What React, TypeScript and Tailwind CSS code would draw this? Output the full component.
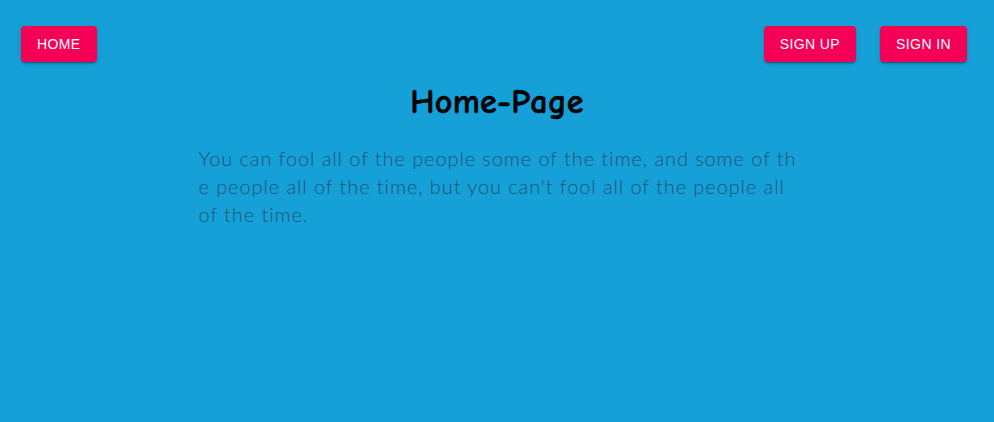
import React from 'react'

const btn =
  "h-9 px-4 rounded bg-[#f50057] text-white text-sm uppercase tracking-[0.4px] shadow-[0_3px_1px_-2px_rgba(0,0,0,0.2),0_2px_2px_0_rgba(0,0,0,0.14),0_1px_5px_0_rgba(0,0,0,0.12)] font-['Liberation_Sans',Arial,sans-serif]"

export default function App() {
  return (
    <div className="w-[994px] h-[422px] bg-[#15a0d8] overflow-hidden">
      {/* Top bar */}
      <div className="flex items-center justify-between pt-[26px] pl-[21px] pr-[27px]">
        <button className={btn}>Home</button>
        <div className="flex gap-6">
          <button className={btn}>Sign Up</button>
          <button className={btn}>Sign In</button>
        </div>
      </div>

      {/* Content */}
      <div className="flex flex-col items-center">
        <h1 className="mt-[20px] text-[34px] leading-[40px] font-bold text-black tracking-[0.3px] [-webkit-text-stroke:0.5px_black] font-['Comic_Sans_MS','Comic_Neue',cursive]">
          Home-Page
        </h1>
        <p className="mt-[22px] w-[600px] ml-[3px] text-[20px] leading-[28px] font-light break-all text-[#1e5573] font-['Lato','Open_Sans',sans-serif] tracking-[0.9px]">
          You can fool all of the people some of the time, and some of the people all of the time, but you can't fool all of the people all of the time.
        </p>
      </div>
    </div>
  )
}
